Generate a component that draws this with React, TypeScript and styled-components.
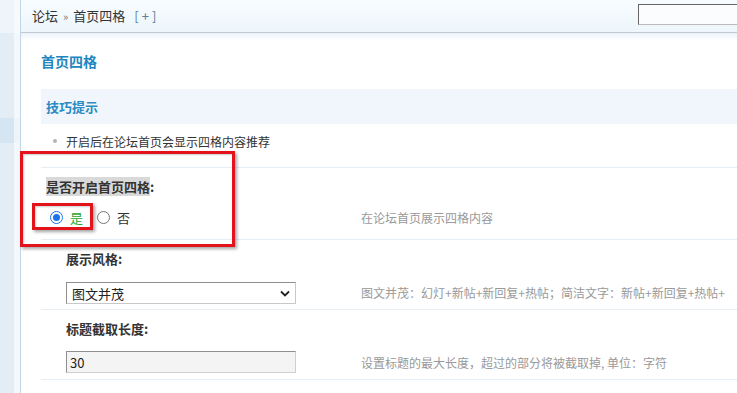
import styled, { createGlobalStyle } from "styled-components";

const GlobalStyle = createGlobalStyle`
  html, body {
    margin: 0;
    padding: 0;
    background: #ffffff;
  }
  body {
    font-family: "Noto Sans CJK SC", "Liberation Sans", sans-serif;
    font-size: 12px;
    color: #333;
    overflow: hidden;
  }
`;

const Page = styled.div`
  display: flex;
  width: 737px;
  height: 393px;
  overflow: hidden;
  position: relative;
`;

const Sidebar = styled.div`
  width: 20px;
  flex-shrink: 0;
  border-right: 1px solid #c4d6e6;
  background: linear-gradient(to right, #e3edf6 0, #e3edf6 14px, #f3f8fc 14px);
  display: flex;
  flex-direction: column;
`;

const SideCap = styled.div`
  height: 33px;
  background: linear-gradient(to right, #edf4fa 0, #edf4fa 14px, #f6fafd 14px);
`;

const SideGap = styled.div`
  height: 85px;
`;

const SideActive = styled.div`
  height: 25px;
  background: linear-gradient(to right, #d6e5f2 0, #d6e5f2 14px, #eef5fa 14px);
`;

const Main = styled.div`
  flex: 1;
  min-width: 0;
  display: flex;
  flex-direction: column;
`;

const TopBar = styled.div`
  height: 32px;
  flex-shrink: 0;
  display: flex;
  align-items: center;
  padding-left: 11px;
  background: linear-gradient(#f7fcff, #eef6fb);
  border-bottom: 1px solid #c3c9cf;
`;

const Crumb = styled.div`
  font-size: 13px;
  color: #333;
  display: flex;
  align-items: center;
  gap: 5px;
  margin-top: -1px;
`;

const Sep = styled.span`
  color: #777;
  font-size: 11px;
`;

const Add = styled.span`
  color: #5d7f9e;
  margin-left: 4px;
  letter-spacing: 3px;
`;

const Search = styled.input`
  margin-left: auto;
  margin-right: -29px;
  margin-top: -3px;
  width: 120px;
  height: 19px;
  box-sizing: content-box;
  border: 1px solid #bbb;
  border-top-color: #666;
  border-left-color: #666;
  background: #fbfcfd;
  padding: 0 3px;
  outline: none;
`;

const Content = styled.div`
  flex: 1;
  padding-left: 20px;
  background: linear-gradient(#eaf3fb 0, #ffffff 8px);
`;

const Title = styled.h2`
  margin: 0;
  height: 56px;
  display: flex;
  align-items: center;
  font-size: 14px;
  font-weight: bold;
  color: #2285c0;
`;

const TipHead = styled.div`
  height: 35px;
  display: flex;
  align-items: center;
  padding-left: 5px;
  background: #f0f6fb;
  font-size: 13px;
  font-weight: bold;
  color: #2a8bc2;
`;

const TipList = styled.ul`
  margin: 0;
  padding: 9px 0 16px 25px;
  list-style: none;
  border-bottom: 1px solid #e6eef5;
`;

const TipItem = styled.li`
  position: relative;
  height: 18px;
  line-height: 18px;
  color: #333;
  &::before {
    content: "";
    position: absolute;
    left: -13px;
    top: 6px;
    width: 4px;
    height: 4px;
    border-radius: 50%;
    background: #b4b4b4;
  }
`;

const Row = styled.div<{ $indent?: boolean; $tail?: number }>`
  border-bottom: 1px solid #e6eef5;
  padding-left: ${(p) => (p.$indent ? "25px" : "5px")};
  padding-bottom: ${(p) => p.$tail ?? 0}px;
  display: grid;
  grid-template-columns: ${(p) => (p.$indent ? "295px" : "315px")} 1fr;
`;

const Label = styled.div`
  grid-column: 1 / 3;
  height: 34px;
  display: flex;
  align-items: center;
  padding-top: 1px;
  font-size: 13px;
  font-weight: bold;
  color: #333;
`;

const Highlight = styled.span`
  background: #d9d9d9;
`;

const Field = styled.div<{ $h?: number }>`
  height: ${(p) => p.$h ?? 34}px;
  display: flex;
  align-items: center;
`;

const Desc = styled.div<{ $h?: number }>`
  height: ${(p) => p.$h ?? 34}px;
  display: flex;
  align-items: center;
  color: #999;
  white-space: nowrap;
  overflow: hidden;
`;

const RadioLabel = styled.label<{ $on?: boolean }>`
  display: inline-flex;
  align-items: center;
  gap: 7px;
  font-size: 13px;
  color: ${(p) => (p.$on ? "#2aa52a" : "#333")};
  margin-right: 10px;
  margin-left: 4px;
`;

const Radio = styled.span<{ $on?: boolean }>`
  width: 11px;
  height: 11px;
  border-radius: 50%;
  border: 1px solid ${(p) => (p.$on ? "#1a73e8" : "#767676")};
  background: #fff;
  display: inline-flex;
  align-items: center;
  justify-content: center;
  &::after {
    content: "";
    width: 7px;
    height: 7px;
    border-radius: 50%;
    background: ${(p) => (p.$on ? "#1a73e8" : "transparent")};
  }
`;

const SelectBox = styled.div`
  width: 218px;
  height: 20px;
  border: 1px solid #8f8f8f;
  border-right-color: #c8c8c8;
  border-bottom-color: #c8c8c8;
  background: #fff;
  display: flex;
  align-items: center;
  justify-content: space-between;
  padding: 0 5px 0 5px;
  box-sizing: content-box;
  font-size: 13px;
  color: #222;
  margin-top: 2px;
`;

const TextInput = styled.div`
  width: 225px;
  height: 20px;
  border: 1px solid #8f8f8f;
  border-right-color: #cfcfcf;
  border-bottom-color: #cfcfcf;
  background: #f4f4f4;
  display: flex;
  align-items: center;
  padding-left: 3px;
  font-size: 13px;
  color: #222;
  box-sizing: content-box;
`;

const Mark = styled.div<{ $x: number; $y: number; $w: number; $h: number }>`
  position: absolute;
  left: ${(p) => p.$x}px;
  top: ${(p) => p.$y}px;
  width: ${(p) => p.$w}px;
  height: ${(p) => p.$h}px;
  border: 3px solid #e3131b;
  box-shadow: 2px 2px 3px rgba(0, 0, 0, 0.35), inset 1px 1px 2px rgba(0, 0, 0, 0.2);
  box-sizing: border-box;
  pointer-events: none;
`;

export default function App() {
  return (
    <>
      <GlobalStyle />
      <Page>
        <Sidebar>
          <SideCap />
          <SideGap />
          <SideActive />
        </Sidebar>
        <Main>
          <TopBar>
            <Crumb>
              论坛 <Sep>»</Sep> 首页四格 <Add>[+]</Add>
            </Crumb>
            <Search />
          </TopBar>
          <Content>
            <Title>首页四格</Title>
            <TipHead>技巧提示</TipHead>
            <TipList>
              <TipItem>开启后在论坛首页会显示四格内容推荐</TipItem>
            </TipList>
            <Row $tail={8}>
              <Label>
                <Highlight>是否开启首页四格</Highlight>:
              </Label>
              <Field $h={28}>
                <RadioLabel $on>
                  <Radio $on />是
                </RadioLabel>
                <RadioLabel>
                  <Radio />否
                </RadioLabel>
              </Field>
              <Desc $h={28}>在论坛首页展示四格内容</Desc>
            </Row>
            <Row $indent>
              <Label>展示风格:</Label>
              <Field>
                <SelectBox>
                  图文并茂
                  <svg width="10" height="7" viewBox="0 0 10 7">
                    <path d="M1 1.5 L5 5.5 L9 1.5" fill="none" stroke="#222" strokeWidth="1.8" />
                  </svg>
                </SelectBox>
              </Field>
              <Desc>图文并茂：幻灯+新帖+新回复+热帖；简洁文字：新帖+新回复+热帖+</Desc>
            </Row>
            <Row $indent>
              <Label>标题截取长度:</Label>
              <Field>
                <TextInput>30</TextInput>
              </Field>
              <Desc>设置标题的最大长度，超过的部分将被截取掉, 单位：字符</Desc>
            </Row>
          </Content>
        </Main>
        <Mark $x={20} $y={151} $w={215} $h={96} />
        <Mark $x={32} $y={203} $w={61} $h={27} />
      </Page>
    </>
  );
}
